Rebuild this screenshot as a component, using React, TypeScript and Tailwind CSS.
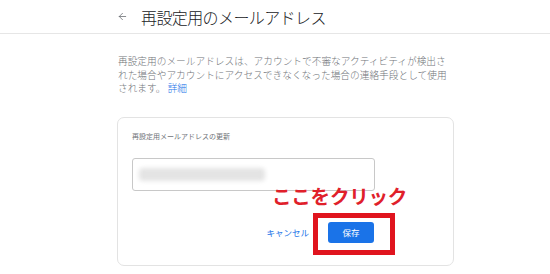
import { ArrowLeft } from 'lucide-react';

const font = { fontFamily: '"Noto Sans CJK JP", "Noto Sans", sans-serif' };

export default function App() {
	return (
		<div className="w-[550px] h-[274px] bg-white overflow-hidden" style={font}>
			{/* Header */}
			<header className="h-[34px] border-b border-[#e6e6e6] flex items-center">
				<div className="ml-[117px] flex items-center">
					<ArrowLeft size={11} strokeWidth={1.6} className="text-[#5f6368]" />
					<h1 className="ml-[13px] text-[16px] leading-none font-light text-[#202124] tracking-[-0.6px]">
						再設定用のメールアドレス
					</h1>
				</div>
			</header>

			<main className="ml-[117px] w-[337px]">
				<p className="mt-[21px] pl-px text-[9.7px] leading-[13.5px] font-light text-[#6f7378]">
					再設定用のメールアドレスは、アカウントで不審なアクティビティが検出された場合やアカウントにアクセスできなくなった場合の連絡手段として使用されます。{' '}
					<span className="text-[#1a73e8]">詳細</span>
				</p>

				{/* Card */}
				<section className="relative mt-[21px] h-[149px] rounded-[7px] border border-[#e3e3e3] pt-[13px] pl-[14px]">
					<div className="text-[7px] leading-[10px] text-[#6f7378]">
						再設定用メールアドレスの更新
					</div>
					<div className="w-[243px]">
						<div className="mt-[17px] h-[33px] rounded-[3px] border border-[#c8c8c8] flex items-center pl-[6px]">
							<div className="h-[13px] w-[126px] rounded-sm bg-[#e4e4e4] blur-[2px]" />
						</div>
						<div className="mt-[31px] flex items-center justify-end">
							<span className="text-[8.5px] text-[#1a73e8]">キャンセル</span>
							<button className="ml-[19px] mr-px h-[21px] w-[46px] rounded-[3px] bg-[#1a73e8] text-[8.5px] text-white">
								保存
							</button>
						</div>
					</div>

					{/* annotation */}
					<div className="absolute left-[154px] top-[68px] text-[19.5px] leading-none font-bold text-[#e0202a] tracking-[-0.2px]">
						ここをクリック
					</div>
					<div className="absolute left-[195px] top-[95px] w-[82px] h-[42px] border-[5px] border-[#e0141e]" />
				</section>
			</main>
		</div>
	);
}
